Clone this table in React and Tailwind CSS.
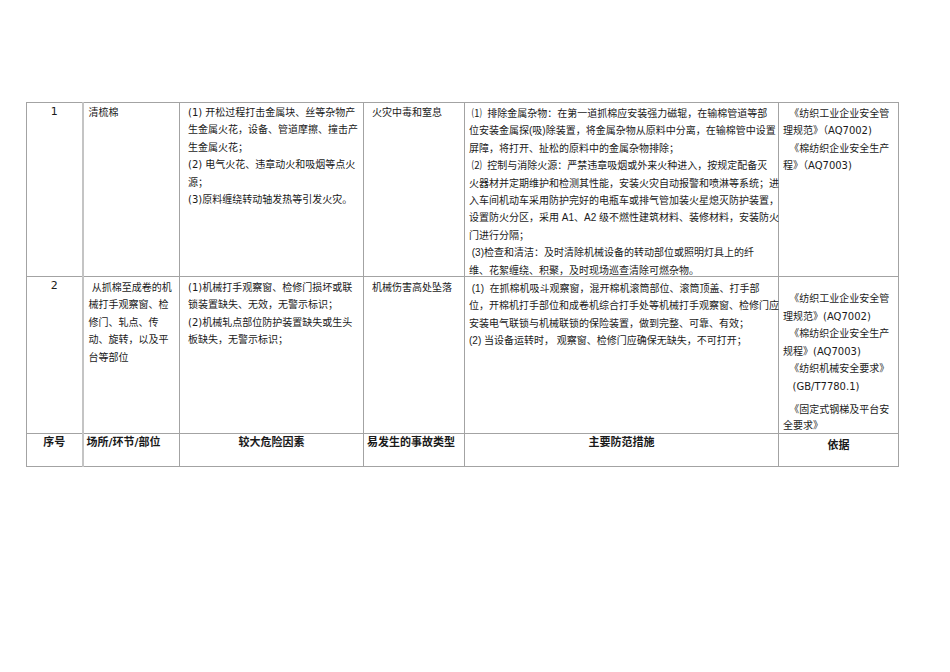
const Lines = ({ lines, className = "" }) => (
  <div className={className}>
    {lines.map((l, i) => (
      <div key={i} className="whitespace-pre">
        {l}
      </div>
    ))}
  </div>
);

const risk1 = [
  "(1) 开松过程打击金属块、丝等杂物产",
  "生金属火花，设备、管道摩擦、撞击产",
  "生金属火花；",
  "(2) 电气火花、违章动火和吸烟等点火",
  "源；",
  "(3)原料缠绕转动轴发热等引发火灾。",
];

const measures1 = [
  " ⑴  排除金属杂物：在第一道抓棉应安装强力磁辊，在输棉管道等部",
  "位安装金属探(吸)除装置，将金属杂物从原料中分离，在输棉管中设置",
  "屏障，将打开、扯松的原料中的金属杂物排除；",
  " ⑵  控制与消除火源：严禁违章吸烟或外来火种进入，按规定配备灭",
  "火器材并定期维护和检测其性能，安装火灾自动报警和喷淋等系统；进",
  "入车间机动车采用防护完好的电瓶车或排气管加装火星熄灭防护装置，",
  "设置防火分区，采用 A1、A2 级不燃性建筑材料、装修材料，安装防火",
  "门进行分隔；",
  " (3)检查和清洁：及时清除机械设备的转动部位或照明灯具上的纤",
  "维、花絮缠绕、积聚，及时现场巡查清除可燃杂物。",
];

const basis1 = ["  《纺织工业企业安全管", "理规范》（AQ7002)", "  《棉纺织企业安全生产", "程》（AQ7003)"];

const place2 = [" 从抓棉至成卷的机", "械打手观察窗、检", "修门、轧点、传", "动、旋转，以及平", "台等部位"];

const risk2 = [
  "(1)机械打手观察窗、检修门损坏或联",
  "锁装置缺失、无效，无警示标识；",
  "(2)机械轧点部位防护装置缺失或生头",
  "板缺失，无警示标识；",
];

const measures2 = [
  " (1)  在抓棉机吸斗观察窗，混开棉机滚筒部位、滚筒顶盖、打手部",
  "位，开棉机打手部位和成卷机综合打手处等机械打手观察窗、检修门应",
  "安装电气联锁与机械联锁的保险装置，做到完整、可靠、有效；",
  "(2) 当设备运转时， 观察窗、检修门应确保无缺失，不可打开；",
];

const basis2 = [
  "  《纺织工业企业安全管",
  "理规范》(AQ7002)",
  "  《棉纺织企业安全生产",
  "规程》(AQ7003)",
  "  《纺织机械安全要求》",
  "   (GB/T7780.1)",
];

export default function App() {
  const font = { fontFamily: '"DejaVu Sans", "Noto Sans CJK SC", sans-serif' };
  const arial = { fontFamily: '"Liberation Sans", "Noto Sans CJK SC", sans-serif' };
  const td = "border border-[#a3a3a3] align-top p-0";
  const c2 = "border-l-2 border-l-[#c4c4c4]";
  return (
    <div className="w-[950px] h-[672px] bg-white text-[#1a1a1a]" style={font}>
      <div className="pt-[102px] pl-[26px]">
        <table className="table-fixed border-collapse w-[872px] text-[10px] leading-[17.4px]">
          <colgroup>
            <col className="w-[56px]" />
            <col className="w-[97px]" />
            <col className="w-[184px]" />
            <col className="w-[101px]" />
            <col className="w-[314px]" />
            <col className="w-[120px]" />
          </colgroup>
          <tbody>
            <tr className="h-[174px]">
              <td className={`${td} text-center text-[11px]`}>
                <div className="h-[160px]">1</div>
              </td>
              <td className={`${td} ${c2}`}>
                <div className="h-[160px] pl-[5px] pt-[1px]">清梳棉</div>
              </td>
              <td className={td}>
                <Lines className="h-[160px] pl-[8px] pt-[1px]" lines={risk1} />
              </td>
              <td className={td}>
                <div className="h-[160px] pl-[8px] pt-[1px]">火灾中毒和窒息</div>
              </td>
              <td className={td} style={arial}>
                <Lines className="h-[160px] pl-[4px] pt-[2px]" lines={measures1} />
              </td>
              <td className={td}>
                <Lines className="h-[160px] pl-[4px] pt-[2px]" lines={basis1} />
              </td>
            </tr>
            <tr className="h-[157px]">
              <td className={`${td} text-center text-[11px]`}>
                <div className="h-[140px]">2</div>
              </td>
              <td className={`${td} ${c2}`}>
                <Lines className="h-[140px] pl-[5px] pt-[2px]" lines={place2} />
              </td>
              <td className={td}>
                <Lines className="h-[140px] pl-[8px] pt-[2px]" lines={risk2} />
              </td>
              <td className={td}>
                <div className="h-[140px] pl-[8px] pt-[2px]">机械伤害高处坠落</div>
              </td>
              <td className={td} style={arial}>
                <Lines className="h-[140px] pl-[4px] pt-[3px]" lines={measures2} />
              </td>
              <td className={td}>
                <div className="h-[140px] pl-[4px] pt-[13px]">
                  <Lines className="leading-[17.6px]" lines={basis2} />
                  <Lines className="mt-[6px] leading-[16.5px]" lines={["  《固定式钢梯及平台安", "全要求》"]} />
                </div>
              </td>
            </tr>
            <tr className="h-[33px] text-[11px] font-bold">
              <td className={`${td} text-center`}>
                <div className="h-[26px]">序号</div>
              </td>
              <td className={`${td} ${c2}`}>
                <div className="h-[26px] pl-[3px]">场所/环节/部位</div>
              </td>
              <td className={`${td} text-center`}>
                <div className="h-[26px]">较大危险因素</div>
              </td>
              <td className={td}>
                <div className="h-[26px] pl-[3px]">易发生的事故类型</div>
              </td>
              <td className={`${td} text-center`}>
                <div className="h-[26px]">主要防范措施</div>
              </td>
              <td className={`${td} text-center`}>
                <div className="h-[26px] pt-[3px]">依据</div>
              </td>
            </tr>
          </tbody>
        </table>
      </div>
    </div>
  );
}
